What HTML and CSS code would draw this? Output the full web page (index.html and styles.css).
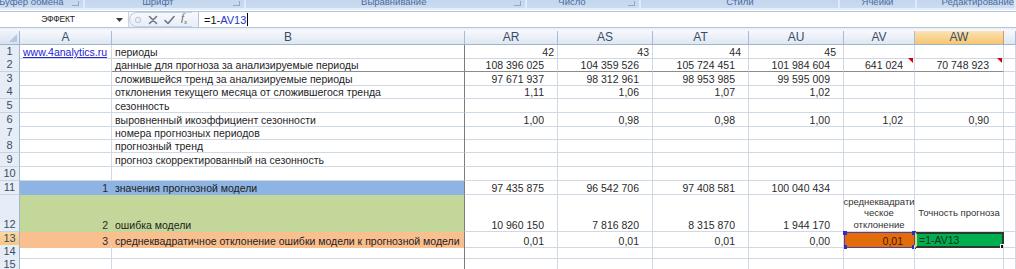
FILE: index.html
```html
<!DOCTYPE html>
<html lang="ru">

<head>
  <meta charset="UTF-8">
  <meta name="viewport" content="width=device-width, initial-scale=1.0">
  <title>прогноз</title>
  <link rel="stylesheet" href="styles.css">
</head>

<body>
  <div class="ribbon">
    <div class="group g1"><span>Буфер обмена</span><i class="launch"></i></div>
    <div class="group g2"><span>Шрифт</span><i class="launch"></i></div>
    <div class="group g3"><span>Выравнивание</span><i class="launch"></i></div>
    <div class="group g4"><span>Число</span><i class="launch"></i></div>
    <div class="group g5"><span>Стили</span></div>
    <div class="group g6"><span>Ячейки</span></div>
    <div class="group g7"><span>Редактирование</span></div>
  </div>

  <div class="fbar">
    <div class="namebox">ЭФФЕКТ</div>
    <div class="namedrop">
      <svg width="7" height="4" viewBox="0 0 7 4"><path d="M0 0h7L3.5 4z" fill="#3b3b3b"/></svg>
    </div>
    <div class="fbtns">
      <div class="pill">
        <svg width="8" height="8" viewBox="0 0 8 8"><circle cx="4" cy="4" r="2.6" fill="none" stroke="#c3cbd6" stroke-width="1.2"/></svg>
        <svg width="10" height="10" viewBox="0 0 10 10"><path d="M1.5 1.5l7 7M8.5 1.5l-7 7" stroke="#6b7686" stroke-width="1.6" stroke-linecap="round"/></svg>
        <svg width="11" height="10" viewBox="0 0 11 10"><path d="M1 5.5l3 3L10 1.5" fill="none" stroke="#6b7686" stroke-width="1.6" stroke-linecap="round" stroke-linejoin="round"/></svg>
        <span class="fx">f<sub>x</sub></span>
      </div>
    </div>
    <div class="finput">=1-<span class="ref">AV13</span><i class="caret"></i></div>
  </div>
  <div class="gap"></div>

  <div class="sheet">
    <div class="row hdr">
      <div class="corner"><i></i></div>
      <div class="ch">A</div>
      <div class="ch">B</div>
      <div class="ch">AR</div>
      <div class="ch">AS</div>
      <div class="ch">AT</div>
      <div class="ch">AU</div>
      <div class="ch">AV</div>
      <div class="ch sel">AW</div>
      <div class="ch"></div>
    </div>

    <div class="row h13">
      <div class="rh">1</div>
      <div class="c a"><span class="link">www.4analytics.ru</span></div>
      <div class="c b">периоды</div>
      <div class="c n p">42</div>
      <div class="c n p">43</div>
      <div class="c n p2">44</div>
      <div class="c n p2">45</div>
      <div class="c"></div>
      <div class="c"></div>
      <div class="c x"></div>
    </div>

    <div class="row h14 r2">
      <div class="rh">2</div>
      <div class="c a"></div>
      <div class="c b">данные для прогноза за анализируемые периоды</div>
      <div class="c n">108 396 025</div>
      <div class="c n">104 359 526</div>
      <div class="c n">105 724 451</div>
      <div class="c n">101 984 604</div>
      <div class="c n nv note">641 024</div>
      <div class="c n nw note">70 748 923</div>
      <div class="c x"></div>
    </div>

    <div class="row h13">
      <div class="rh">3</div>
      <div class="c a"></div>
      <div class="c b">сложившейся тренд за анализируемые периоды</div>
      <div class="c n">97 671 937</div>
      <div class="c n">98 312 961</div>
      <div class="c n">98 953 985</div>
      <div class="c n">99 595 009</div>
      <div class="c"></div>
      <div class="c"></div>
      <div class="c x"></div>
    </div>

    <div class="row h14">
      <div class="rh">4</div>
      <div class="c a"></div>
      <div class="c b">отклонения текущего месяца от сложившегося тренда</div>
      <div class="c n">1,11</div>
      <div class="c n">1,06</div>
      <div class="c n">1,07</div>
      <div class="c n">1,02</div>
      <div class="c"></div>
      <div class="c"></div>
      <div class="c x"></div>
    </div>

    <div class="row h14">
      <div class="rh">5</div>
      <div class="c a"></div>
      <div class="c b">сезонность</div>
      <div class="c"></div>
      <div class="c"></div>
      <div class="c"></div>
      <div class="c"></div>
      <div class="c"></div>
      <div class="c"></div>
      <div class="c x"></div>
    </div>

    <div class="row h13">
      <div class="rh">6</div>
      <div class="c a"></div>
      <div class="c b">выровненный икоэффициент сезонности</div>
      <div class="c n">1,00</div>
      <div class="c n">0,98</div>
      <div class="c n">0,98</div>
      <div class="c n">1,00</div>
      <div class="c n nv">1,02</div>
      <div class="c n nw">0,90</div>
      <div class="c x"></div>
    </div>

    <div class="row h13">
      <div class="rh">7</div>
      <div class="c a"></div>
      <div class="c b">номера прогнозных периодов</div>
      <div class="c"></div>
      <div class="c"></div>
      <div class="c"></div>
      <div class="c"></div>
      <div class="c"></div>
      <div class="c"></div>
      <div class="c x"></div>
    </div>

    <div class="row h14">
      <div class="rh">8</div>
      <div class="c a"></div>
      <div class="c b">прогнозный тренд</div>
      <div class="c"></div>
      <div class="c"></div>
      <div class="c"></div>
      <div class="c"></div>
      <div class="c"></div>
      <div class="c"></div>
      <div class="c x"></div>
    </div>

    <div class="row h14">
      <div class="rh">9</div>
      <div class="c a"></div>
      <div class="c b">прогноз скорректированный на сезонность</div>
      <div class="c"></div>
      <div class="c"></div>
      <div class="c"></div>
      <div class="c"></div>
      <div class="c"></div>
      <div class="c"></div>
      <div class="c x"></div>
    </div>

    <div class="row h14">
      <div class="rh">10</div>
      <div class="c a"></div>
      <div class="c b"></div>
      <div class="c"></div>
      <div class="c"></div>
      <div class="c"></div>
      <div class="c"></div>
      <div class="c"></div>
      <div class="c"></div>
      <div class="c x"></div>
    </div>

    <div class="row h14 blue">
      <div class="rh">11</div>
      <div class="c a n p">1</div>
      <div class="c b">значения прогнозной модели</div>
      <div class="c n">97 435 875</div>
      <div class="c n">96 542 706</div>
      <div class="c n">97 408 581</div>
      <div class="c n">100 040 434</div>
      <div class="c"></div>
      <div class="c"></div>
      <div class="c x"></div>
    </div>

    <div class="row h37 green">
      <div class="rh">12</div>
      <div class="c a n p">2</div>
      <div class="c b">ошибка модели</div>
      <div class="c n">10 960 150</div>
      <div class="c n">7 816 820</div>
      <div class="c n">8 315 870</div>
      <div class="c n">1 944 170</div>
      <div class="c wrap">среднеквадрати<br>ческое<br>отклонение</div>
      <div class="c wrap mid">Точность прогноза</div>
      <div class="c x"></div>
    </div>

    <div class="row h13 orange">
      <div class="rh sel">13</div>
      <div class="c a n p">3</div>
      <div class="c b">среднеквадратичное отклонение ошибки модели к прогнозной модели</div>
      <div class="c n">0,01</div>
      <div class="c n">0,01</div>
      <div class="c n">0,01</div>
      <div class="c n">0,00</div>
      <div class="c n nv refcell">0,01<i class="k k1"></i><i class="k k2"></i><i class="k k3"></i><i class="k k4"></i></div>
      <div class="c active">=1-AV13<i class="handle"></i></div>
      <div class="c x"></div>
    </div>

    <div class="row h13">
      <div class="rh">14</div>
      <div class="c a"></div>
      <div class="c b"></div>
      <div class="c"></div>
      <div class="c"></div>
      <div class="c"></div>
      <div class="c"></div>
      <div class="c"></div>
      <div class="c"></div>
      <div class="c x"></div>
    </div>

    <div class="row h13">
      <div class="rh">15</div>
      <div class="c a"></div>
      <div class="c b"></div>
      <div class="c"></div>
      <div class="c"></div>
      <div class="c"></div>
      <div class="c"></div>
      <div class="c"></div>
      <div class="c"></div>
      <div class="c x"></div>
    </div>
  </div>
</body>

</html>
```

FILE: styles.css
```css
* {
  margin: 0;
  padding: 0;
  box-sizing: border-box;
}

body {
  width: 1016px;
  height: 269px;
  overflow: hidden;
  background: #fff;
  font-family: "Liberation Sans", Arial, sans-serif;
  font-size: 10.5px;
  color: #1e1e1e;
}

/* ribbon: only the bottom of the group captions is visible */
.ribbon {
  display: flex;
  height: 10px;
  overflow: hidden;
  background: linear-gradient(#c3d6ee, #cbdcf1);
  border-bottom: 2px solid #e6eef8;
}

.group {
  display: flex;
  justify-content: center;
  align-items: flex-start;
  height: 8px;
  border-right: 2px solid #e0e9f5;
  color: #4a6c9c;
  font-size: 9.5px;
  line-height: 10px;
  white-space: nowrap;
}

.group span {
  margin-top: -3px;
}

.launch {
  width: 7px;
  height: 5px;
  margin: 1px 4px 0 auto;
  border-right: 1px solid #90a9c9;
  border-bottom: 1px solid #90a9c9;
}

.g1 { width: 86px; justify-content: flex-start; }
.g1 span { margin-left: -1px; }
.g2 { width: 162px; padding-left: 57px; }
.g3 { width: 283px; padding-left: 115px; }
.g4 { width: 115px; padding-left: 31px; }
.g5 { width: 201px; }
.g6 { width: 77px; }
.g7 { flex: 1; justify-content: flex-start; padding-left: 25px; }

.g2 span, .g3 span, .g4 span { margin-right: auto; }

/* formula bar */
.fbar {
  display: flex;
  height: 17px;
  margin-top: 1px;
  border-top: 1px solid #b3c6dd;
  border-bottom: 1px solid #b3c6dd;
  background: #fff;
}

.namebox {
  width: 116px;
  text-align: center;
  font-size: 8.5px;
  line-height: 15px;
  color: #222;
  letter-spacing: -0.2px;
}

.namedrop {
  display: flex;
  align-items: center;
  width: 12px;
}

.fbtns {
  display: flex;
  align-items: center;
  width: 70px;
  background: linear-gradient(#f7f9fc, #e8eef6);
  border-left: 1px solid #c8d5e5;
}

.pill {
  display: flex;
  align-items: center;
  gap: 6px;
  height: 15px;
  padding: 0 5px 0 4px;
  border: 1px solid #c5d2e2;
  border-radius: 8px 0 0 8px;
  border-right: 0;
}

.fx {
  font-family: "Liberation Serif", serif;
  font-style: italic;
  font-size: 11px;
  color: #56606e;
  line-height: 10px;
}

.fx sub {
  font-size: 7px;
}

.finput {
  display: flex;
  align-items: center;
  flex: 1;
  padding-left: 5px;
  border-left: 1px solid #b3c6dd;
  font-size: 11px;
  color: #111;
}

.ref {
  color: #2a37c8;
}

.caret {
  width: 1px;
  height: 13px;
  margin-left: 1px;
  background: #000;
}

.gap {
  height: 3px;
  background: linear-gradient(#e9eff7, #f7f9fc);
}

/* sheet grid */
.row {
  display: grid;
  grid-template-columns: 20px 92px 353px 93px 95px 96px 95px 71px 89px 12px;
}

.hdr { height: 14px; }
.h13 { height: 13px; }
.h14 { height: 14px; }
.h37 { height: 37px; }

.corner {
  display: flex;
  align-items: flex-end;
  justify-content: flex-end;
  padding: 0 2px 2px 0;
  background: linear-gradient(#eef3fa, #d8e2ef);
  border-right: 1px solid #9eb6ce;
  border-bottom: 1px solid #9eb6ce;
}

.corner i {
  width: 0;
  height: 0;
  border-left: 8px solid transparent;
  border-bottom: 8px solid #b8c8dc;
}

.ch {
  background: linear-gradient(#f6f8fc, #dfe7f2);
  border-right: 1px solid #a8bdd4;
  border-bottom: 1px solid #9eb6ce;
  text-align: center;
  font-size: 12px;
  line-height: 13px;
  color: #3c4d63;
}

.ch.sel {
  background: linear-gradient(#fbe3b2, #f6c573);
  border-color: #f0b050 #c9a060 #9eb6ce #c9a060;
}

.rh {
  background: #e6edf7;
  border-right: 1px solid #9eb6ce;
  border-bottom: 1px solid #c7d4e4;
  text-align: center;
  font-size: 11px;
  line-height: 13px;
  color: #3c4d63;
}

.rh.sel {
  background: linear-gradient(#fbd9a4, #f6c47c);
}

.h37 .rh {
  display: flex;
  align-items: flex-end;
  justify-content: center;
}

.c {
  display: flex;
  align-items: flex-end;
  position: relative;
  padding: 0 3px;
  border-right: 1px solid #d0d7e5;
  border-bottom: 1px solid #d0d7e5;
  line-height: 12px;
  white-space: nowrap;
  color: #1e1e1e;
}

.c.b {
  border-right-color: #7c7c7c;
}

.n {
  justify-content: flex-end;
  padding-right: 13px;
  color: #2a2a2a;
}

.n.p { padding-right: 3px; }
.n.p2 { padding-right: 7px; }
.n.nv { padding-right: 11px; }
.n.nw { padding-right: 14px; }

.r2 .c:not(.a):not(.x) {
  border-bottom-color: #8c8c8c;
}

.link {
  color: #2323d0;
  text-decoration: underline;
}

/* red comment markers */
.note::after {
  content: '';
  position: absolute;
  top: 0;
  right: 1px;
  border-left: 5px solid transparent;
  border-top: 5px solid #d40000;
}

/* coloured blocks */
.blue .a, .blue .b {
  background: #8db4e2;
  border-bottom-color: #8db4e2;
}

.blue .a { border-right-color: #8db4e2; }

.green .a, .green .b {
  background: #c4d79b;
  border-bottom-color: #c4d79b;
}

.green .a { border-right-color: #c4d79b; }

.orange .a, .orange .b {
  background: #fabf8f;
  border-bottom-color: #fabf8f;
}

.orange .a { border-right-color: #fabf8f; }

.wrap {
  flex-direction: column;
  justify-content: flex-end;
  align-items: center;
  padding: 0 0 1px;
  white-space: normal;
  text-align: center;
  font-size: 9.5px;
  line-height: 11.5px;
  color: #333;
}

.wrap.mid {
  justify-content: center;
  padding-bottom: 0;
}

.refcell {
  background: #e36c0a;
  border: 1px solid #5a3f9a;
  color: #3a1a00;
}

.k {
  position: absolute;
  width: 4px;
  height: 4px;
  background: #2b2bd0;
}

.k1 { top: -2px; left: -2px; }
.k2 { top: -2px; right: -2px; }
.k3 { bottom: -2px; left: -2px; }
.k4 { bottom: -2px; right: -2px; }

.active {
  background: #00b050;
  border: 2px solid #2d3a2d;
  border-left-color: #cfe070;
  padding-left: 2px;
  align-items: center;
  color: #12301c;
}

.handle {
  position: absolute;
  right: -3px;
  bottom: -3px;
  width: 5px;
  height: 5px;
  background: #111;
  border: 1px solid #fff;
}
```
